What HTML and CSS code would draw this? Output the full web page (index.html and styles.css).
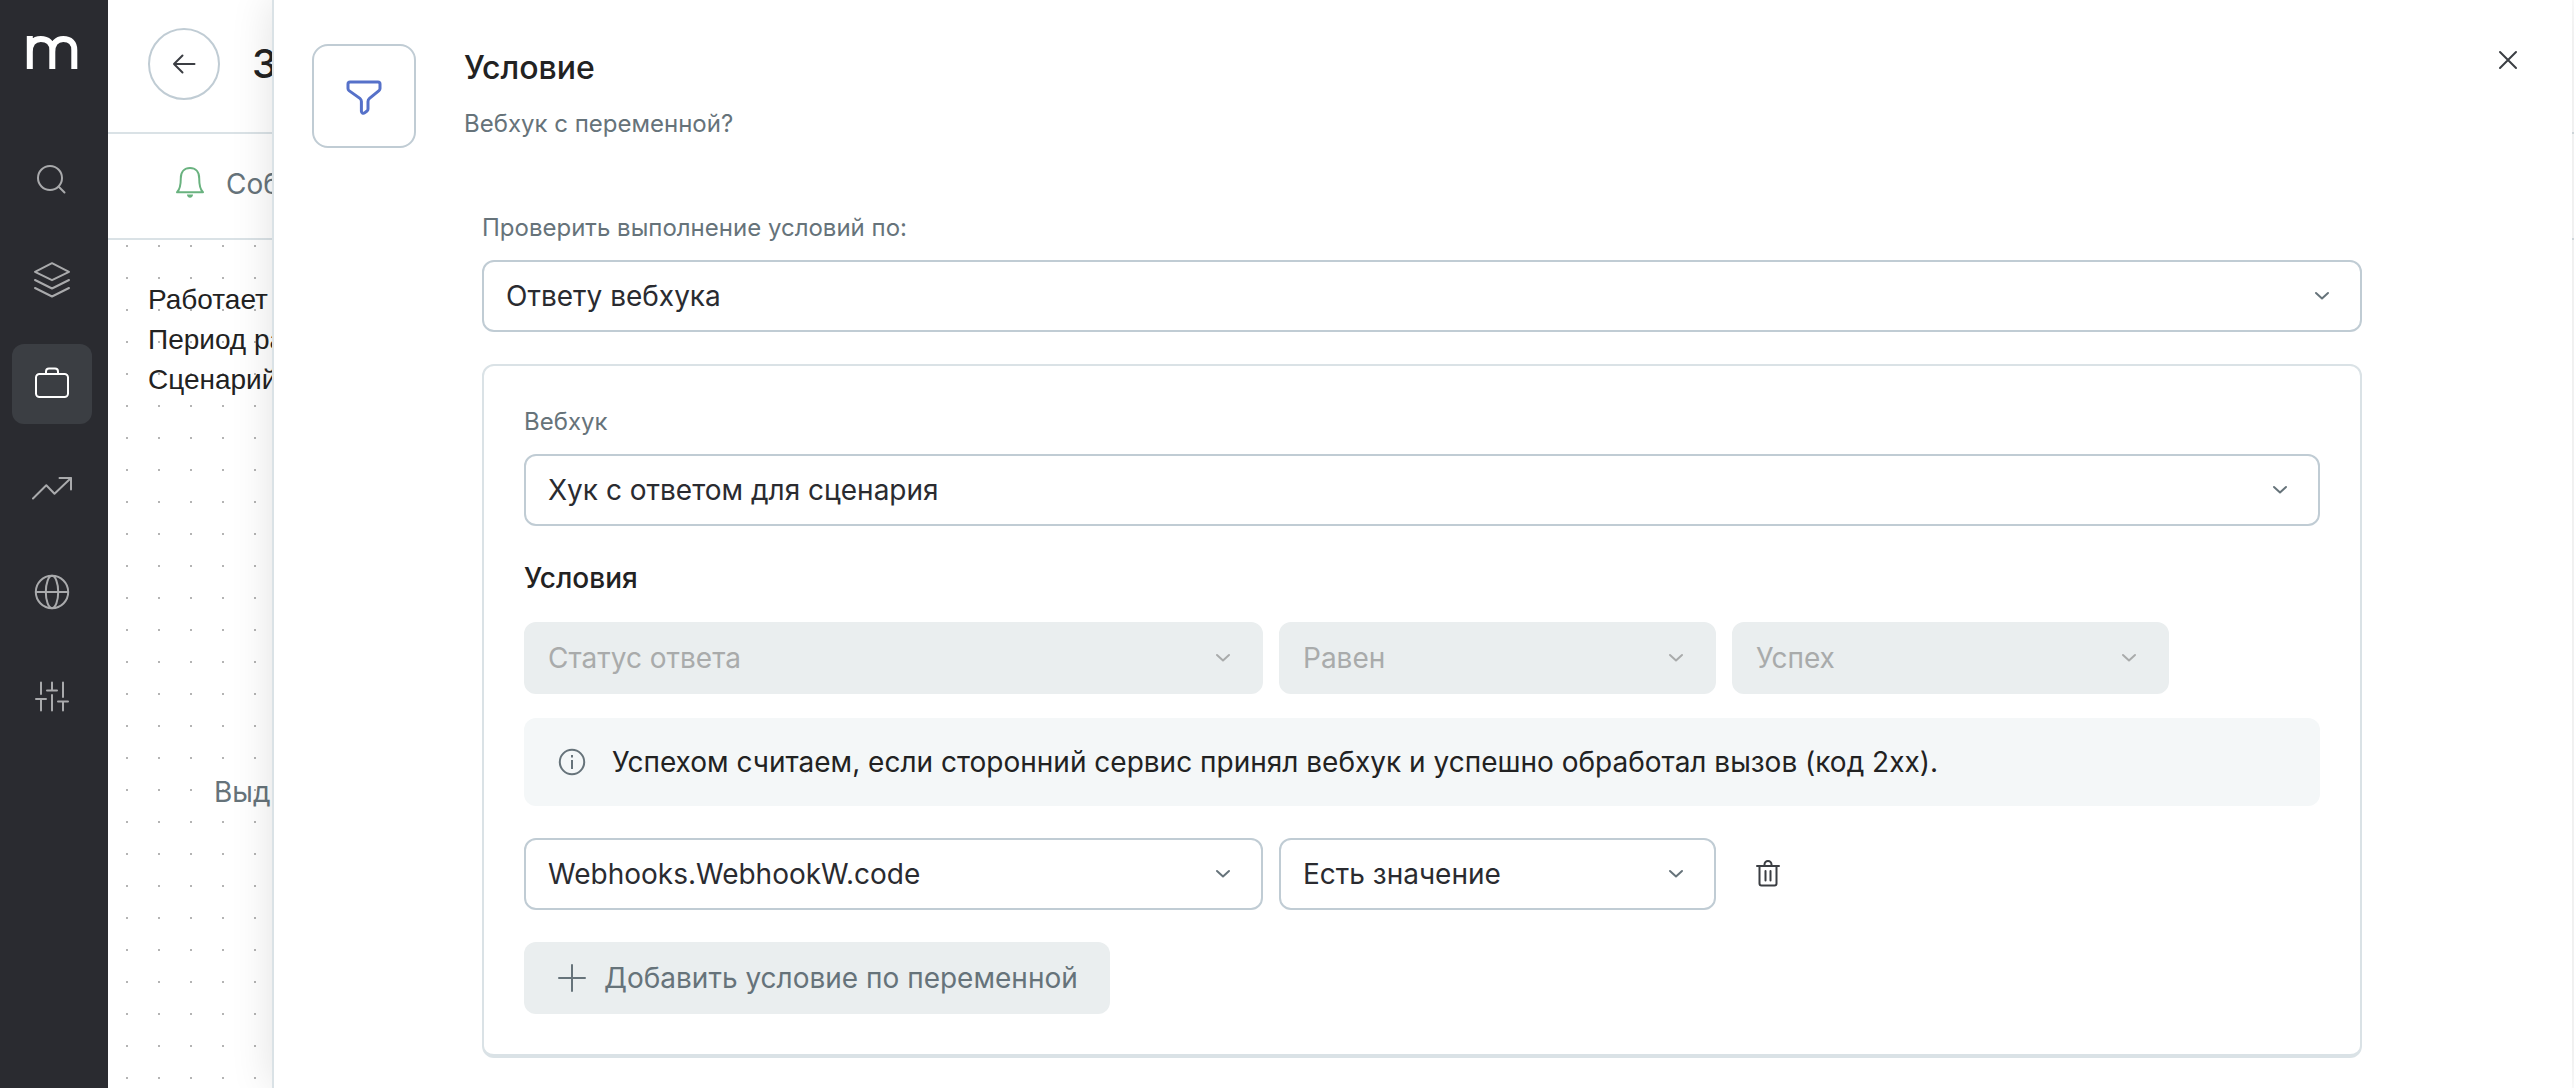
FILE: index.html
```html
<!DOCTYPE html>
<html lang="ru">
<head>
<meta charset="utf-8">
<meta name="viewport" content="width=device-width, initial-scale=1">
<title>Условие</title>
<link rel="stylesheet" href="styles.css">
</head>
<body>
<svg class="sprite" aria-hidden="true">
  <symbol id="chevron" viewBox="0 0 16 16"><path d="M2 5l6 5.500 6-5.500"/></symbol>
</svg>
<div class="app">
  <aside class="sidebar">
    <a class="logo" href="#" aria-label="Главная">
      <svg width="56" height="40" viewBox="0 0 56 40"><path d="M5.800 4v33M5.800 20c0-8.500 4-13 11-13 7 0 11.500 4 11.500 11v19M28.300 20c0-8.500 4.500-13 11-13 7 0 11 4 11 11v19"/></svg>
    </a>
    <nav class="nav">
      <a class="nav-item" href="#" aria-label="Поиск"><svg viewBox="0 0 40 40"><circle cx="18" cy="22" r="12"/><path d="M27 31l5.500 5.500"/></svg></a>
      <a class="nav-item" href="#" aria-label="Слои"><svg viewBox="0 0 40 40"><path d="M20 3.200l17 8.600-17 8.400-17-8.400zM3 20l17 8.500L37 20M3 28l17 8.500L37 28"/></svg></a>
      <a class="nav-item nav-item-active" href="#" aria-label="Кампании"><svg viewBox="0 0 40 40"><rect x="4" y="10" width="32" height="23" rx="3.500"/><path d="M14 10V7.500a3 3 0 0 1 3-3h6a3 3 0 0 1 3 3V10"/></svg></a>
      <a class="nav-item" href="#" aria-label="Отчёты"><svg viewBox="0 0 40 40"><path d="M1 30.500L14.300 17.300l8.200 8.400L39 10M27.500 10H39v11.500"/></svg></a>
      <a class="nav-item" href="#" aria-label="Сайт"><svg viewBox="0 0 40 40"><circle cx="20" cy="20" r="16.200"/><ellipse cx="20" cy="20" rx="6.200" ry="16.200"/><path d="M4 20h32"/></svg></a>
      <a class="nav-item" href="#" aria-label="Настройки"><svg viewBox="0 0 40 40"><path d="M9 6.500V18M4 23h10M9 23v11.500M20 6.500v8M15 14.500h10M20 19v15.500M31 6.500V21M26 25.500h10M31 25.500v9"/></svg></a>
    </nav>
  </aside>

  <main class="workspace">
    <header class="topbar">
      <button class="back" type="button" aria-label="Назад"><svg width="24" height="24" viewBox="0 0 24 24"><path d="M22.500 12H2M10.500 3.500L2 12l8.500 8.500"/></svg></button>
      <h1 class="page-title">З</h1>
    </header>
    <div class="tabs">
      <a class="tab" href="#">
        <svg width="36" height="36" viewBox="0 0 36 36"><path d="M5 26.300h26c-3.200-3-3.800-6.500-3.800-14C27.200 5.800 23.500 2 18 2S8.800 5.800 8.800 12.300c0 7.500-.6 11-3.800 14z"/><path class="clapper" d="M15 28.500h6c0 2-1.200 3.200-3 3.200s-3-1.200-3-3.200z"/></svg>
        <span>Соб</span>
      </a>
    </div>
    <section class="canvas">
      <p class="summary">Работает<br>Период ра<br>Сценарий</p>
      <p class="hint">Выд</p>
    </section>
  </main>

  <section class="drawer" role="dialog" aria-labelledby="drawer-title">
    <header class="drawer-head">
      <div class="step-icon"><svg width="40" height="40" viewBox="0 0 40 40"><path d="M6 6h28a2 2 0 0 1 2 2v4.600a2.500 2.500 0 0 1-1 2l-9.500 7.800a4 4 0 0 0-1.500 3.100v7.500a2.500 2.500 0 0 1-1 2l-2.400 1.900a2 2 0 0 1-3.200-1.600v-9.800a4 4 0 0 0-1.500-3.100L5 14.600a2.500 2.500 0 0 1-1-2V8a2 2 0 0 1 2-2z"/></svg></div>
      <div class="drawer-titles">
        <h2 class="drawer-title" id="drawer-title">Условие</h2>
        <p class="drawer-subtitle">Вебхук с переменной?</p>
      </div>
      <button class="icon-button" type="button" aria-label="Закрыть"><svg width="32" height="32" viewBox="0 0 32 32"><path d="M8 8l16 16M24 8L8 24"/></svg></button>
    </header>

    <form class="drawer-body">
      <label class="label" for="check-by">Проверить выполнение условий по:</label>
      <div class="select">
        <select id="check-by"><option>Ответу вебхука</option></select>
        <svg class="chevron"><use href="#chevron"/></svg>
      </div>

      <div class="card">
        <label class="label" for="webhook">Вебхук</label>
        <div class="select">
          <select id="webhook"><option>Хук с ответом для сценария</option></select>
          <svg class="chevron"><use href="#chevron"/></svg>
        </div>

        <h3 class="card-title">Условия</h3>
        <div class="condition">
          <div class="select">
            <select aria-label="Поле" disabled><option>Статус ответа</option></select>
            <svg class="chevron"><use href="#chevron"/></svg>
          </div>
          <div class="select">
            <select aria-label="Сравнение" disabled><option>Равен</option></select>
            <svg class="chevron"><use href="#chevron"/></svg>
          </div>
          <div class="select">
            <select aria-label="Значение" disabled><option>Успех</option></select>
            <svg class="chevron"><use href="#chevron"/></svg>
          </div>
        </div>

        <div class="notice">
          <svg width="32" height="32" viewBox="0 0 32 32"><circle cx="16" cy="16" r="12.200"/><path d="M16 14v9M16 9v2.500"/></svg>
          <p>Успехом считаем, если сторонний сервис принял вебхук и успешно обработал вызов (код 2xx).</p>
        </div>

        <div class="condition">
          <div class="select">
            <select aria-label="Переменная"><option>Webhooks.WebhookW.code</option></select>
            <svg class="chevron"><use href="#chevron"/></svg>
          </div>
          <div class="select">
            <select aria-label="Проверка"><option>Есть значение</option></select>
            <svg class="chevron"><use href="#chevron"/></svg>
          </div>
          <button class="icon-button icon-button-delete" type="button" aria-label="Удалить"><svg width="32" height="32" viewBox="0 0 32 32"><path d="M5 8h22M7.500 8v17.500a2 2 0 0 0 2 2h13a2 2 0 0 0 2-2V8M12.500 8V6.500a3.500 3.500 0 0 1 7 0V8M13.500 13v9.500M18.500 13v9.500"/></svg></button>
        </div>

        <button class="add-button" type="button">
          <svg width="32" height="32" viewBox="0 0 32 32"><path d="M3 16h26M16 3v26"/></svg>
          <span>Добавить условие по переменной</span>
        </button>
      </div>
    </form>
  </section>
</div>
</body>
</html>
```

FILE: styles.css
```css
*,
*::before,
*::after {
  box-sizing: border-box;
}

body,
h1,
h2,
h3,
p {
  margin: 0;
}

body {
  background: #fff;
  color: #222;
  font-family: Inter, "Liberation Sans", sans-serif;
  font-size: 28px;
  line-height: 40px;
}

button,
select {
  font: inherit;
  color: inherit;
}

button {
  padding: 0;
  border: 0;
  background: none;
  cursor: pointer;
}

a {
  color: inherit;
  text-decoration: none;
}

svg {
  display: block;
  flex: none;
  fill: none;
  stroke: currentColor;
  stroke-width: 2;
  stroke-linecap: round;
  stroke-linejoin: round;
}

.sprite {
  display: none;
}

.app {
  position: relative;
  display: flex;
  min-height: 100vh;
  overflow: hidden;
}

/* Sidebar */

.sidebar {
  flex: none;
  width: 108px;
  padding: 32px 16px 32px 12px;
  background: #2a2b30;
}

.logo {
  display: flex;
  justify-content: center;
  margin-bottom: 64px;
  color: #fff;
}

.logo svg {
  stroke-width: 6;
  stroke-linecap: butt;
}

.nav {
  display: flex;
  flex-direction: column;
  gap: 24px;
}

.nav-item {
  display: flex;
  align-items: center;
  justify-content: center;
  height: 80px;
  border-radius: 12px;
  color: #a9aaac;
}

.nav-item svg {
  width: 40px;
  height: 40px;
}

.nav-item-active {
  background: #3b3e43;
  color: #fff;
}

/* Workspace */

.workspace {
  flex: 1;
  display: flex;
  flex-direction: column;
  min-width: 0;
}

.topbar {
  display: flex;
  align-items: center;
  gap: 32px;
  padding: 28px 40px 32px;
  border-bottom: 2px solid #dae2e6;
}

.back {
  display: flex;
  align-items: center;
  justify-content: center;
  width: 72px;
  height: 72px;
  border: 2px solid #c0ccd4;
  border-radius: 50%;
  color: #3b3e43;
}

.page-title {
  font-size: 40px;
  font-weight: 500;
  line-height: 48px;
}

.tabs {
  display: flex;
  padding: 0 64px;
  border-bottom: 2px solid #dae2e6;
}

.tab {
  display: flex;
  align-items: center;
  gap: 18px;
  padding: 30px 0 34px;
  color: #66737a;
}

.tab svg {
  color: #69b27f;
}

.tab .clapper {
  fill: currentColor;
  stroke: none;
}

.canvas {
  flex: 1;
  padding: 40px;
  background: radial-gradient(circle at 1px 1px, #b4b4b4 1px, transparent 1px) 18px 5px / 32px 32px;
}

.summary {
  font-family: "Liberation Sans", sans-serif;
}

.hint {
  padding: 372px 66px 0;
  color: #66737a;
}

/* Drawer */

.drawer {
  position: absolute;
  inset: 0 2px 0 272px;
  overflow-y: auto;
  padding-bottom: 28px;
  border-left: 2px solid #dae2e6;
  background: #fff;
  box-shadow: 0 0 40px rgba(0, 0, 0, 0.12);
}

.drawer-head {
  display: flex;
  align-items: flex-start;
  padding: 44px 48px 0 38px;
}

.step-icon {
  display: flex;
  align-items: center;
  justify-content: center;
  width: 104px;
  height: 104px;
  border: 2px solid #c0ccd4;
  border-radius: 16px;
  color: #5671c9;
}

.step-icon svg {
  stroke-width: 3;
}

.drawer-titles {
  flex: 1;
  padding-left: 48px;
}

.drawer-title {
  margin-bottom: 16px;
  font-size: 32px;
  font-weight: 500;
  line-height: 48px;
}

.drawer-subtitle,
.label {
  color: #66737a;
  font-size: 24px;
  line-height: 32px;
}

.icon-button {
  display: flex;
  color: #3b3e43;
}

.drawer-body {
  padding: 64px 210px 0 208px;
}

.label {
  display: block;
  margin-bottom: 16px;
}

.select {
  position: relative;
}

.select select {
  display: block;
  width: 100%;
  height: 72px;
  padding: 0 72px 0 22px;
  appearance: none;
  border: 2px solid #c0ccd4;
  border-radius: 12px;
  background: #fff;
  color: #2a2b30;
}

.select select:disabled {
  border-color: #eaeeef;
  background: #eaeeef;
  color: #a9abab;
  opacity: 1;
}

.chevron {
  position: absolute;
  top: 28px;
  right: 32px;
  width: 16px;
  height: 16px;
  color: #66737a;
  pointer-events: none;
}

.select select:disabled + .chevron {
  color: #a9abab;
}

.card {
  margin-top: 32px;
  padding: 40px;
  border: 2px solid #dae2e6;
  border-bottom-width: 4px;
  border-radius: 12px;
}

.card-title {
  margin: 32px 0 24px;
  font-size: 28px;
  font-weight: 500;
  line-height: 40px;
}

.condition {
  display: grid;
  grid-template-columns: 739fr 437fr 437fr 135fr;
  align-items: center;
  gap: 16px;
}

.icon-button-delete {
  justify-self: start;
  margin-left: 20px;
}

.notice {
  display: flex;
  align-items: center;
  gap: 24px;
  margin: 24px 0 32px;
  padding: 24px 32px;
  border-radius: 12px;
  background: #f4f7f8;
}

.notice svg {
  color: #66737a;
  stroke-linecap: butt;
}

.add-button {
  display: flex;
  align-items: center;
  gap: 16px;
  height: 72px;
  margin-top: 32px;
  padding: 0 32px;
  border-radius: 12px;
  background: #eaeeef;
  color: #66737a;
}
```
